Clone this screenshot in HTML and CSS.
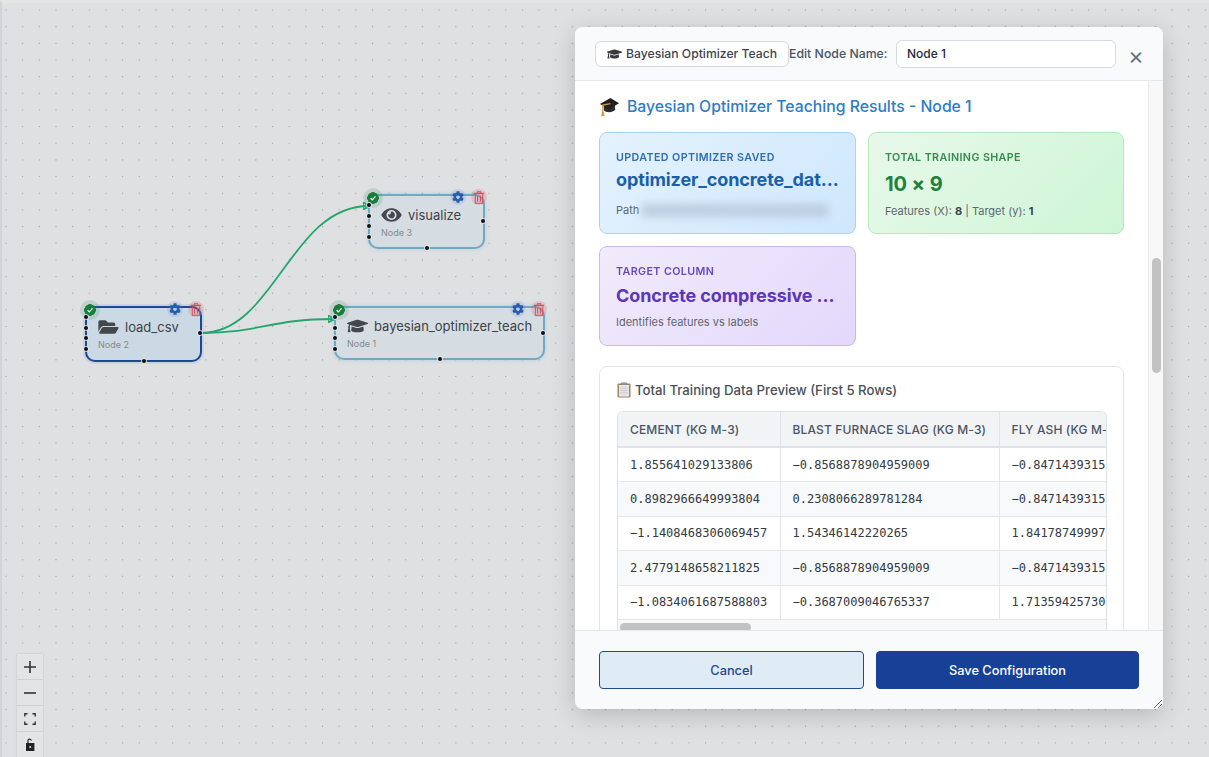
FILE: index.html
```html
<!DOCTYPE html>
<html lang="en">
<head>
  <meta charset="UTF-8">
  <title>Bayesian Optimizer Teach</title>
  <link rel="stylesheet" href="styles.css">
</head>
<body>
  <svg width="0" height="0" class="icon-defs">
    <defs>
      <symbol id="i-cap" viewBox="0 0 640 512"><path d="M622.34 153.2L343.4 67.5c-15.2-4.67-31.6-4.67-46.79 0L17.66 153.2c-23.54 7.23-23.54 38.36 0 45.59l48.63 14.94c-10.67 13.19-17.23 29.28-17.88 46.9C38.78 266.15 32 276.11 32 288c0 10.78 5.68 19.85 13.86 25.65L20.33 428.53C18.11 438.52 25.71 448 35.94 448h56.11c10.24 0 17.84-9.48 15.62-19.47L82.14 313.65C90.32 307.85 96 298.78 96 288c0-11.57-6.47-21.25-15.66-26.87.76-15.02 8.44-28.3 20.69-36.72L296.6 284.5c9.06 2.78 26.44 6.25 46.79 0l278.95-85.7c23.55-7.24 23.55-38.36 0-45.6zM352.79 315.09c-28.53 8.76-52.84 3.92-65.59 0l-145.02-44.55L128 384c0 35.35 85.96 64 192 64s192-28.65 192-64l-14.18-113.47-145.03 44.56z"/></symbol>
      <symbol id="i-folder" viewBox="0 0 576 512"><path d="M572.694 292.093L500.27 416.248A63.997 63.997 0 0 1 444.989 448H45.025c-18.523 0-30.064-20.093-20.731-36.093l72.424-124.155A64 64 0 0 1 152 256h399.964c18.523 0 30.064 20.093 20.73 36.093zM152 224h328v-48c0-26.51-21.49-48-48-48H272l-64-64H48C21.49 64 0 85.49 0 112v278.046l69.077-118.418C86.214 242.25 117.989 224 152 224z"/></symbol>
      <symbol id="i-eye" viewBox="0 0 576 512"><path d="M572.52 241.4C518.29 135.59 410.93 64 288 64S57.68 135.64 3.48 241.41a32.35 32.35 0 0 0 0 29.19C57.71 376.41 165.07 448 288 448s230.32-71.64 284.52-177.41a32.35 32.35 0 0 0 0-29.19zM288 400a144 144 0 1 1 144-144 143.93 143.93 0 0 1-144 144zm0-240a95.31 95.31 0 0 0-25.31 3.79 47.85 47.85 0 0 1-66.9 66.9A95.78 95.78 0 1 0 288 160z"/></symbol>
      <symbol id="i-cog" viewBox="0 0 512 512"><path d="M487.4 315.7l-42.6-24.6c4.3-23.2 4.3-47 0-70.2l42.6-24.6c4.9-2.8 7.1-8.6 5.5-14-11.1-35.6-30-67.8-54.7-94.6-3.8-4.1-10-5.1-14.8-2.3L380.8 110c-17.9-15.4-38.5-27.3-60.8-35.1V25.8c0-5.6-3.9-10.5-9.4-11.7-36.7-8.2-74.3-7.8-109.2 0-5.5 1.2-9.4 6.1-9.4 11.7V75c-22.2 7.9-42.8 19.8-60.8 35.1L88.7 85.5c-4.9-2.8-11-1.9-14.8 2.3-24.7 26.7-43.6 58.9-54.7 94.6-1.7 5.4.6 11.2 5.5 14L67.3 221c-4.3 23.2-4.3 47 0 70.2l-42.6 24.6c-4.9 2.8-7.1 8.6-5.5 14 11.1 35.6 30 67.8 54.7 94.6 3.8 4.1 10 5.1 14.8 2.3l42.6-24.6c17.9 15.4 38.5 27.3 60.8 35.1v49.2c0 5.6 3.9 10.5 9.4 11.7 36.7 8.2 74.3 7.8 109.2 0 5.5-1.2 9.4-6.1 9.4-11.7v-49.2c22.2-7.9 42.8-19.8 60.8-35.1l42.6 24.6c4.9 2.8 11 1.900 14.8-2.300 24.700-26.700 43.600-58.900 54.700-94.600 1.500-5.500-.7-11.300-5.600-14.100zM256 336c-44.100 0-80-35.900-80-80s35.900-80 80-80 80 35.900 80 80-35.900 80-80 80z"/></symbol>
      <symbol id="i-trash" viewBox="0 0 12 14"><path d="M.5 2.600h11" fill="none" stroke="currentColor" stroke-width="1.400"/><path d="M4.300 2V.8h3.400V2M2 3.500v9.800h8V3.500M4.500 5.200v6.400M7.500 5.200v6.400" fill="none" stroke="currentColor" stroke-width="1.100"/></symbol>
      <symbol id="i-check" viewBox="0 0 10 10"><path d="M2.600 5.200l1.700 1.700 3.200-3.500" fill="none" stroke="#fff" stroke-width="1.200"/></symbol>
    </defs>
  </svg>

  <div class="canvas">
    <svg class="edges" width="1209" height="757">
      <defs>
        <marker id="arrow" markerUnits="userSpaceOnUse" markerWidth="7" markerHeight="8" refX="6" refY="4" orient="auto">
          <path d="M0 .5L7 4L0 7.500z" fill="#25a56e"/>
        </marker>
      </defs>
      <path d="M201 333C275 333 290 206 369 206" marker-end="url(#arrow)"/>
      <path d="M201 333C260 333 270 319 334 319" marker-end="url(#arrow)"/>
    </svg>

    <div class="node node-visualize">
      <span class="status"><svg><use href="#i-check"/></svg></span>
      <span class="action gear"><svg><use href="#i-cog"/></svg></span>
      <span class="action bin"><svg><use href="#i-trash"/></svg></span>
      <span class="handle l1"></span><span class="handle l2"></span><span class="handle l3"></span><span class="handle l4"></span>
      <span class="handle right"></span><span class="handle bottom"></span>
      <div class="node-title"><svg class="node-icon"><use href="#i-eye"/></svg>visualize</div>
      <div class="node-sub">Node 3</div>
    </div>

    <div class="node node-load selected">
      <span class="status"><svg><use href="#i-check"/></svg></span>
      <span class="action gear"><svg><use href="#i-cog"/></svg></span>
      <span class="action bin"><svg><use href="#i-trash"/></svg></span>
      <span class="handle l1"></span><span class="handle l2"></span><span class="handle l3"></span><span class="handle l4"></span>
      <span class="handle right"></span><span class="handle bottom"></span>
      <div class="node-title"><svg class="node-icon"><use href="#i-folder"/></svg>load_csv</div>
      <div class="node-sub">Node 2</div>
    </div>

    <div class="node node-teach">
      <span class="status"><svg><use href="#i-check"/></svg></span>
      <span class="action gear"><svg><use href="#i-cog"/></svg></span>
      <span class="action bin"><svg><use href="#i-trash"/></svg></span>
      <span class="handle l1"></span><span class="handle l2"></span><span class="handle l3"></span><span class="handle l4"></span>
      <span class="handle right"></span><span class="handle bottom"></span>
      <div class="node-title"><svg class="node-icon"><use href="#i-cap"/></svg>bayesian_optimizer_teach</div>
      <div class="node-sub">Node 1</div>
    </div>

    <div class="controls">
      <button class="ctrl"><svg width="12" height="12" viewBox="0 0 12 12"><path d="M6 0v12M0 6h12" stroke="#333" stroke-width="1.600"/></svg></button>
      <button class="ctrl"><svg width="12" height="12" viewBox="0 0 12 12"><path d="M0 6h12" stroke="#333" stroke-width="1.600"/></svg></button>
      <button class="ctrl"><svg width="12" height="12" viewBox="0 0 12 12"><path d="M.8 3.500V.8h2.700M8.500.8h2.700v2.700M11.200 8.500v2.700H8.500M3.500 11.200H.8V8.500" fill="none" stroke="#333" stroke-width="1.400"/></svg></button>
      <button class="ctrl"><svg width="10" height="14" viewBox="0 0 10 14"><path d="M3 5V2.600C3 1.400 4.400.8 5.400 1.400L6.600 2.400" fill="none" stroke="#222" stroke-width="1.200"/><path fill-rule="evenodd" d="M1 5h8.400v8H1zM5.200 8a1 1 0 1 0 0 2 1 1 0 0 0 0-2z" fill="#222"/></svg></button>
    </div>
  </div>

  <div class="modal">
    <header class="modal-head">
      <div class="type-chip"><svg class="chip-icon"><use href="#i-cap"/></svg>Bayesian Optimizer Teach</div>
      <label class="name-label" for="node-name">Edit Node Name:</label>
      <input class="name-input" id="node-name" type="text" value="Node 1">
      <span class="close">&times;</span>
    </header>

    <div class="modal-middle">
      <main class="modal-body">
        <h3 class="results-title">
          <svg class="results-icon" viewBox="0 0 22 22">
            <path d="M5 9.500v5.500c2 2.500 9 3 12-.5l-.5-5.500z" fill="#2b2b30"/>
            <path d="M1 8.500L12 2l9 5.500-10.500 6.500z" fill="#1f1f24"/>
            <path d="M12 8L4 9.500V17" fill="none" stroke="#d59a34" stroke-width="1.300"/>
            <path d="M3 16.500h2l.8 4.500H2.500z" fill="#d59a34"/>
          </svg>
          Bayesian Optimizer Teaching Results - Node 1
        </h3>

        <div class="stat-grid">
          <div class="stat stat-blue">
            <div class="stat-label">Updated Optimizer Saved</div>
            <div class="stat-value">optimizer_concrete_data_teach.pkl</div>
            <div class="stat-sub">Path <span class="blurred"></span></div>
          </div>
          <div class="stat stat-green">
            <div class="stat-label">Total Training Shape</div>
            <div class="stat-value big">10 × 9</div>
            <div class="stat-sub">Features (X): <b>8</b> | Target (y): <b>1</b></div>
          </div>
          <div class="stat stat-purple">
            <div class="stat-label">Target Column</div>
            <div class="stat-value">Concrete compressive strength</div>
            <div class="stat-sub">Identifies features vs labels</div>
          </div>
        </div>

        <section class="preview">
          <h4 class="preview-title">
            <svg class="clip-icon" viewBox="0 0 14 16">
              <rect x="0.500" y="1.500" width="13" height="14" rx="1" fill="#a5835f"/>
              <rect x="2" y="3" width="10" height="11.500" fill="#e3e5e8"/>
              <rect x="4" y="0.500" width="6" height="2.500" fill="#8d8f94"/>
              <path d="M3.500 6h7M3.500 8.500h7M3.500 11h7" stroke="#c3c6cb" stroke-width="0.800"/>
            </svg>
            Total Training Data Preview (First 5 Rows)
          </h4>
          <div class="table-wrap">
            <table class="data-table">
              <thead>
                <tr><th>Cement (kg m-3)</th><th>Blast Furnace Slag (kg m-3)</th><th>Fly Ash (kg m-3)</th></tr>
              </thead>
              <tbody>
                <tr><td>1.855641029133806</td><td>−0.8568878904959009</td><td>−0.8471439315988</td></tr>
                <tr><td>0.8982966649993804</td><td>0.2308066289781284</td><td>−0.8471439315988</td></tr>
                <tr><td>−1.1408468306069457</td><td>1.54346142220265</td><td>1.8417874999712</td></tr>
                <tr><td>2.4779148658211825</td><td>−0.8568878904959009</td><td>−0.8471439315988</td></tr>
                <tr><td>−1.0834061687588803</td><td>−0.3687009046765337</td><td>1.7135942573021</td></tr>
              </tbody>
            </table>
            <div class="hscroll"><div class="hscroll-thumb"></div></div>
          </div>
        </section>
      </main>
      <div class="vscroll"><div class="vscroll-thumb"></div></div>
    </div>

    <footer class="modal-foot">
      <button class="btn btn-cancel">Cancel</button>
      <button class="btn btn-save">Save Configuration</button>
    </footer>

    <svg class="resize-grip" width="10" height="10" viewBox="0 0 10 10"><path d="M1 9L9 1M5 9L9 5" stroke="#777" stroke-width="1"/></svg>
  </div>
</body>
</html>
```

FILE: styles.css
```css
* {
  box-sizing: border-box;
}

html,
body {
  margin: 0;
  height: 100%;
  overflow: hidden;
}

body {
  font-family: Inter, "Liberation Sans", sans-serif;
  background-color: #dfe0e2;
  color: #333;
}

.icon-defs {
  position: absolute;
}

/* canvas */
.canvas {
  position: relative;
  width: 1209px;
  height: 757px;
  background-color: #dfe0e2;
  background-image: radial-gradient(circle, #9d9ea1 0.8px, transparent 1px);
  background-size: 16.67px 16.67px;
  background-position: -4.3px -1.3px;
  border-top: 3px solid #e4e5e7;
  border-left: 2px solid #d2d3d6;
}

.edges {
  position: absolute;
  left: -2px;
  top: -3px;
}

.edges path {
  fill: none;
  stroke: #25a56e;
  stroke-width: 1.8;
}

.node {
  position: absolute;
  border: 2px solid #6fa9c4;
  border-radius: 10px;
  background: #d5dde2;
  box-shadow: 0 0 4px rgba(110, 170, 200, 0.35);
  padding: 10px 0 0 11px;
}

.node-visualize {
  left: 366px;
  top: 191px;
  width: 117px;
  height: 55px;
}

.node-load {
  left: 83px;
  top: 303px;
  width: 117px;
  height: 56px;
}

.node-teach {
  left: 332px;
  top: 303px;
  width: 211px;
  height: 54px;
  padding-top: 9px;
}

.selected {
  border-color: #1d4796;
  background: #cbd9e4;
  box-shadow: 0 0 0 2px rgba(90, 140, 210, 0.15);
}

.node-title {
  display: flex;
  align-items: center;
  gap: 6px;
  font-size: 13px;
  line-height: 18px;
  color: #3d4247;
}

.node-icon {
  flex: none;
  width: 21px;
  height: 18px;
  fill: #44484c;
}

.node-sub {
  font-size: 9px;
  line-height: 12px;
  margin-top: 3px;
  color: #85898e;
}

.status,
.action {
  position: absolute;
  border-radius: 50%;
  display: flex;
  align-items: center;
  justify-content: center;
}

.status {
  left: -7px;
  top: -8px;
  width: 20px;
  height: 20px;
  background: radial-gradient(circle, #1a7d3a 0 5.5px, rgba(40, 130, 80, 0.16) 6px);
}

.status svg {
  width: 10px;
  height: 10px;
}

.action {
  top: -7px;
  width: 16px;
  height: 16px;
}

.action svg {
  width: 12px;
  height: 12px;
}

.gear {
  right: 17px;
  background: rgba(80, 130, 220, 0.16);
  fill: #2a5cab;
}

.bin {
  right: -4px;
  background: rgba(225, 80, 90, 0.2);
  color: #c8515c;
}

.bin svg {
  height: 13px;
}

.handle {
  position: absolute;
  width: 4px;
  height: 4px;
  border-radius: 50%;
  background: #111;
  box-shadow: 0 0 0 1px rgba(225, 230, 235, 0.8);
}

.handle.l1 { left: -3px; top: 7px; }
.handle.l2 { left: -3px; top: 18px; }
.handle.l3 { left: -3px; top: 28px; }
.handle.l4 { left: -3px; top: 39px; }
.handle.right { right: -2px; top: 23px; }
.handle.bottom { left: 50%; margin-left: -2px; bottom: -3px; }

.controls {
  position: absolute;
  left: 15px;
  top: 651px;
  display: flex;
  flex-direction: column;
  box-shadow: 0 0 2px rgba(0, 0, 0, 0.15);
}

.ctrl {
  width: 26px;
  height: 26px;
  padding: 0;
  border: none;
  border-bottom: 1px solid #d0d1d3;
  background: #e3e4e5;
  display: flex;
  align-items: center;
  justify-content: center;
}

/* modal */
.modal {
  position: absolute;
  left: 575px;
  top: 27px;
  width: 588px;
  height: 682px;
  background: #fff;
  border-radius: 8px;
  box-shadow: 0 6px 24px rgba(0, 0, 0, 0.18);
  display: flex;
  flex-direction: column;
  overflow: hidden;
}

.modal-head {
  height: 54px;
  flex: none;
  display: flex;
  align-items: center;
  padding: 0 20px;
  background: #f8fafc;
  border-bottom: 1px solid #e4e7eb;
}

.type-chip {
  display: flex;
  align-items: center;
  gap: 4px;
  height: 26px;
  width: 194px;
  flex: none;
  padding-left: 11px;
  background: #fff;
  border: 1px solid #d5d9df;
  border-radius: 6px;
  font-size: 12.2px;
  font-weight: 500;
  color: #3e444c;
  white-space: nowrap;
}

.chip-icon {
  width: 15px;
  height: 12px;
  fill: #3a3a3f;
}

.name-label {
  font-size: 12.3px;
  font-weight: 500;
  color: #4b5563;
  white-space: nowrap;
  width: 107px;
  flex: none;
}

.name-input {
  width: 220px;
  height: 28px;
  flex: none;
  padding: 0 10px;
  border: 1px solid #d5d9e2;
  border-radius: 6px;
  font-family: inherit;
  font-size: 12px;
  font-weight: 500;
  color: #1f2937;
  background: #fff;
}

.close {
  margin-left: 12px;
  margin-top: 4px;
  font-size: 24px;
  line-height: 20px;
  color: #6b7280;
}

.modal-middle {
  flex: 1;
  min-height: 0;
  display: flex;
}

.modal-body {
  flex: 1;
  min-width: 0;
  overflow: hidden;
  padding: 15px 24px 0;
}

.vscroll {
  width: 15px;
  flex: none;
  background: #f8f8f9;
  border-left: 1px solid #e6e7e9;
  padding: 177px 2px 0 3px;
}

.vscroll-thumb {
  width: 9px;
  height: 115px;
  border-radius: 5px;
  background: #c2c2c2;
}

.results-title {
  margin: 0 0 16px;
  height: 20px;
  display: flex;
  align-items: center;
  gap: 7px;
  font-size: 15.75px;
  font-weight: 500;
  color: #2d7cc8;
}

.results-icon {
  width: 21px;
  height: 21px;
  flex: none;
}

.stat-grid {
  display: grid;
  grid-template-columns: 257px 256px;
  gap: 12px;
}

.stat {
  border-radius: 8px;
  padding: 18px 16px 0;
  border: 1px solid;
  min-width: 0;
}

.stat-blue {
  height: 102px;
  border-color: #a9d4f5;
  background: linear-gradient(135deg, #e4f2fd, #cfe7fd);
  color: #1a5fa8;
}

.stat-green {
  height: 102px;
  border-color: #b6e8c0;
  background: linear-gradient(135deg, #e8f8ea, #cdf6d5);
  color: #23803b;
}

.stat-purple {
  height: 100px;
  border-color: #ccb8ee;
  background: linear-gradient(135deg, #f1ebfc, #e3d8fb);
  color: #5a36b8;
}

.stat-label {
  font-size: 10.7px;
  font-weight: 600;
  line-height: 13px;
  letter-spacing: 0.4px;
  text-transform: uppercase;
  opacity: 0.9;
}

.stat-value {
  margin-top: 6px;
  font-size: 18px;
  line-height: 24px;
  font-weight: 700;
  letter-spacing: -0.1px;
  white-space: nowrap;
  overflow: hidden;
  text-overflow: ellipsis;
}

.stat-blue .stat-value {
  margin-top: 4px;
}

.stat-value.big {
  font-size: 20px;
  line-height: 28px;
}

.stat-sub {
  margin-top: 11px;
  font-size: 11px;
  line-height: 14px;
  color: #5d6670;
  display: flex;
  gap: 3px;
  align-items: center;
}

.stat-green .stat-sub {
  margin-top: 6px;
  display: block;
}

.stat-purple .stat-sub {
  margin-top: 7px;
}

.stat-sub b {
  color: #3d444c;
}

.blurred {
  display: block;
  width: 186px;
  height: 13px;
  background: #bccddf;
  filter: blur(4px);
}

.preview {
  margin-top: 20px;
  padding: 15px 16px 0 17px;
  background: #fff;
  border: 1px solid #e3e5e9;
  border-radius: 8px;
  height: 300px;
}

.preview-title {
  margin: 0 0 13px;
  display: flex;
  align-items: center;
  gap: 4px;
  height: 16px;
  font-size: 13.2px;
  font-weight: 500;
  color: #4a5058;
}

.clip-icon {
  width: 14px;
  height: 16px;
  flex: none;
}

.table-wrap {
  overflow: hidden;
  border: 1px solid #dfe2e6;
  border-bottom: none;
  border-radius: 6px 6px 0 0;
}

.data-table {
  border-collapse: collapse;
  table-layout: fixed;
  width: 620px;
}

.data-table th:nth-child(1),
.data-table td:nth-child(1) { width: 162px; }

.data-table th:nth-child(2),
.data-table td:nth-child(2) { width: 219px; }

.data-table th {
  height: 35px;
  padding: 0 12px;
  background: #f2f3f5;
  border-right: 1px solid #dfe2e6;
  border-bottom: 2px solid #dfe2e6;
  text-align: left;
  font-size: 12px;
  font-weight: 500;
  letter-spacing: 0.15px;
  text-transform: uppercase;
  color: #4b5563;
  white-space: nowrap;
  overflow: hidden;
}

.data-table td {
  height: 34.5px;
  padding: 0 12px;
  border-right: 1px solid #e4e6e9;
  border-bottom: 1px solid #e4e6e9;
  font-family: "DejaVu Sans Mono", monospace;
  font-size: 12px;
  color: #333a41;
  white-space: nowrap;
  overflow: hidden;
}

.data-table tbody tr:nth-child(even) td {
  background: #f8f9fb;
}

.hscroll {
  height: 11px;
  background: #f8f8f9;
  padding-left: 2px;
  padding-top: 3px;
}

.hscroll-thumb {
  width: 131px;
  height: 9px;
  border-radius: 5px;
  background: #c2c2c2;
}

.modal-foot {
  height: 79px;
  flex: none;
  display: flex;
  gap: 12px;
  padding: 20px 24px 0;
  background: #f8fafc;
  border-top: 1px solid #e4e7eb;
}

.btn {
  height: 38px;
  border-radius: 4px;
  font-family: inherit;
  font-size: 12.8px;
  font-weight: 500;
}

.btn-cancel {
  width: 265px;
  background: #dfebf5;
  border: 1px solid #1e4a8f;
  color: #1e4a8f;
}

.btn-save {
  width: 263px;
  background: #174097;
  border: 1px solid #174097;
  color: #fff;
}

.resize-grip {
  position: absolute;
  right: 0;
  bottom: 0;
}
```
